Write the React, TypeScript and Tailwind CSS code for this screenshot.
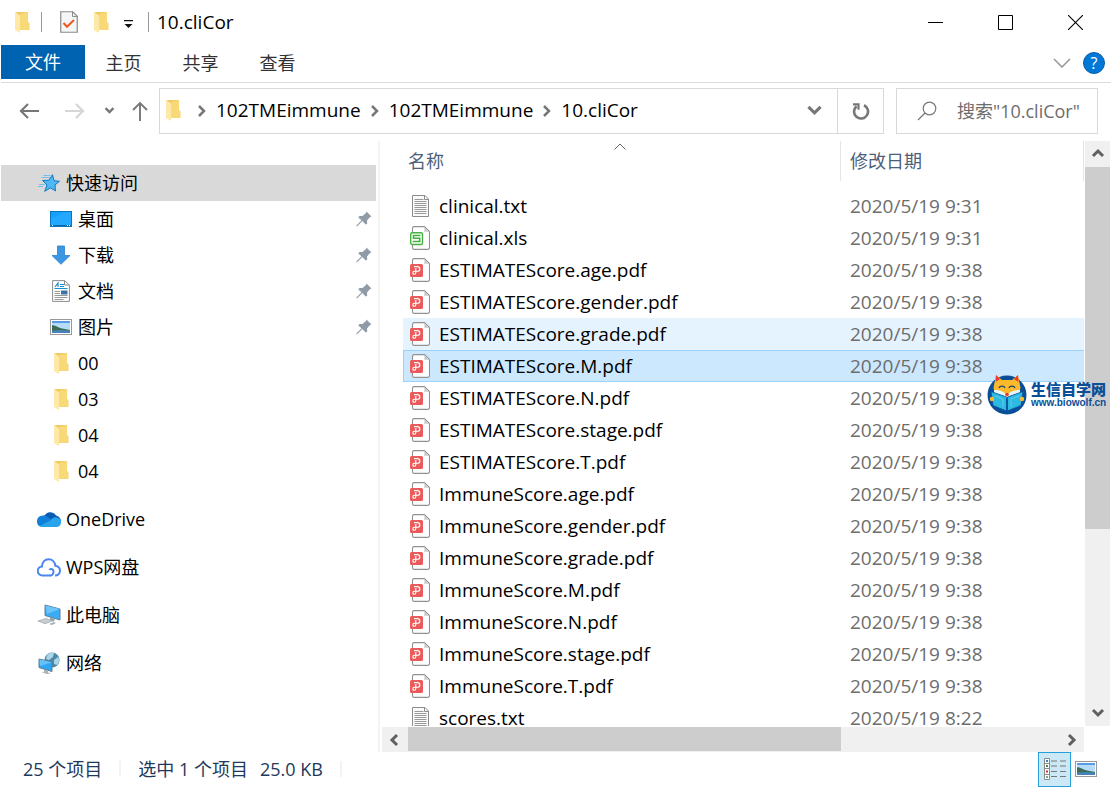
import type { ReactNode } from 'react'
import clsx from 'clsx'

type FileKind = 'txt' | 'xls' | 'pdf'

interface FileRow {
  name: string
  date: string
  state?: 'hover' | 'selected'
}

const files: FileRow[] = [
  { name: 'clinical.txt', date: '2020/5/19 9:31' },
  { name: 'clinical.xls', date: '2020/5/19 9:31' },
  { name: 'ESTIMATEScore.age.pdf', date: '2020/5/19 9:38' },
  { name: 'ESTIMATEScore.gender.pdf', date: '2020/5/19 9:38' },
  { name: 'ESTIMATEScore.grade.pdf', date: '2020/5/19 9:38', state: 'hover' },
  { name: 'ESTIMATEScore.M.pdf', date: '2020/5/19 9:38', state: 'selected' },
  { name: 'ESTIMATEScore.N.pdf', date: '2020/5/19 9:38' },
  { name: 'ESTIMATEScore.stage.pdf', date: '2020/5/19 9:38' },
  { name: 'ESTIMATEScore.T.pdf', date: '2020/5/19 9:38' },
  { name: 'ImmuneScore.age.pdf', date: '2020/5/19 9:38' },
  { name: 'ImmuneScore.gender.pdf', date: '2020/5/19 9:38' },
  { name: 'ImmuneScore.grade.pdf', date: '2020/5/19 9:38' },
  { name: 'ImmuneScore.M.pdf', date: '2020/5/19 9:38' },
  { name: 'ImmuneScore.N.pdf', date: '2020/5/19 9:38' },
  { name: 'ImmuneScore.stage.pdf', date: '2020/5/19 9:38' },
  { name: 'ImmuneScore.T.pdf', date: '2020/5/19 9:38' },
  { name: 'scores.txt', date: '2020/5/19 8:22' },
]

function FolderIcon() {
  return (
    <svg width="15" height="21" viewBox="0 0 15 21" className="shrink-0">
      <path d="M1 0h12v10l1.300 1.500V18H4z" fill="#f0ca64" />
      <path d="M5 2l8-2v10l1.300 1.500V18H5z" fill="#f8d978" />
      <path d="M0 0l5 3.500V21l-5-3z" fill="#ffe9a6" />
    </svg>
  )
}

function CheckDocIcon() {
  return (
    <svg width="18" height="22" viewBox="0 0 18 22" fill="none">
      <path d="M.75.75h12l4.500 4.500v16H.75z" fill="#f5f6f8" stroke="#8b8b8b" strokeWidth="1.200" />
      <path d="M12.500.75v4.800h4.700" stroke="#8b8b8b" />
      <path d="M3.500 12l3.500 3.800L14 9" stroke="#ee5a1c" strokeWidth="2" />
    </svg>
  )
}

function TextFileIcon() {
  return (
    <svg width="20" height="24" viewBox="0 0 20 24" fill="none">
      <path d="M2.500 1.500H15l3.500 3.500v17.500h-16z" fill="#fafafa" stroke="#8c8c8c" />
      <path d="M14.500 1.500v4h4" stroke="#8c8c8c" />
      <path
        d="M4.500 5.500h9M4.500 7.500h12M4.500 9.500h12M4.500 11.500h12M4.500 13.500h12M4.500 15.500h12M4.500 17.500h12M4.500 19.500h12"
        stroke="#999"
      />
    </svg>
  )
}

function PageOutline() {
  return (
    <>
      <path d="M4 .6h10.500l5 5v16a1.800 1.800 0 0 1-1.800 1.800H4A1.800 1.800 0 0 1 2.500 21.600V2.400A1.800 1.800 0 0 1 4 .6z" fill="#fff" stroke="#929292" strokeWidth="1.100" />
      <path d="M14.300 1v4.700h4.900z" fill="#c9c9c9" />
    </>
  )
}

function SheetFileIcon() {
  return (
    <svg width="20" height="24" viewBox="0 0 20 24" fill="none">
      <PageOutline />
      <rect x=".7" y="6.700" width="11.800" height="11.800" rx="1.500" fill="#fff" stroke="#45b23f" strokeWidth="1.400" />
      <path d="M10.500 9.500H3.500v2.800h6.200v3.200H2.700" stroke="#45b23f" strokeWidth="1.600" />
    </svg>
  )
}

function PdfFileIcon() {
  return (
    <svg width="20" height="24" viewBox="0 0 20 24" fill="none">
      <PageOutline />
      <rect y="6" width="13" height="13" rx="1.500" fill="#ec5b5b" />
      <path
        d="M4 8.600h3.500a2.300 2.300 0 0 1 0 4.700H4.200a1.500 1.500 0 1 0 1.600 1.500V10"
        stroke="#fff"
        strokeWidth="1.100"
      />
    </svg>
  )
}

function FileIcon({ kind }: { kind: FileKind }) {
  if (kind === 'txt') return <TextFileIcon />
  if (kind === 'xls') return <SheetFileIcon />
  return <PdfFileIcon />
}

function StarIcon() {
  return (
    <svg width="22" height="18" viewBox="0 0 22 18">
      <path d="M5.500 1.500h7M3.500 3.500h8M1 10.500h6M0 12.500h5" stroke="#5db8ee" strokeWidth=".8" />
      <path d="M14.500.7l1.500 6 5.500.6-4.500 3.600.5 6-5-3-5.800 3.400L9 11 4.500 6.500l6.300-.2z" fill="#4db8f5" stroke="#1478bb" strokeWidth="1" />
    </svg>
  )
}

function DesktopIcon() {
  return (
    <svg width="22" height="16" viewBox="0 0 22 16">
      <rect x=".5" y=".5" width="21" height="15" fill="#14a0ff" stroke="#0b76c0" />
      <path d="M1 14V8L14 1h7v13z" fill="#2eabff" opacity=".6" />
      <path d="M1 14.500h20" stroke="#0868ad" />
      <path d="M2 14.500h1M17 14.500h1M19 14.500h1" stroke="#fff" />
    </svg>
  )
}

function DownloadIcon() {
  return (
    <svg width="20" height="20" viewBox="0 0 20 20">
      <path d="M6.500 1h7v9.500h5.500l-9 8.800-9-8.800h5.500z" fill="#3b96e4" stroke="#2d7fca" strokeWidth=".8" />
    </svg>
  )
}

function DocumentIcon() {
  return (
    <svg width="18" height="22" viewBox="0 0 18 22" fill="none">
      <path d="M.6.6h12l4.800 4.500v16.300H.6z" fill="#fff" stroke="#8c8c8c" />
      <path d="M12.500.6V5h4.800" stroke="#8c8c8c" />
      <path d="M3 7l3-4v4M8 4.500h4M8 6.500h4M2.500 8.500h13" stroke="#1b8fd6" strokeWidth="1.200" />
      <path d="M2.500 11.500H8M2.500 13.500H8M2.500 15.500h13M2.500 17.500h13M2.500 19.500h9" stroke="#999" />
      <path d="M9 10.500h6.500v4H9z" fill="#3b73a8" />
    </svg>
  )
}

function PictureIcon() {
  return (
    <svg width="22" height="16" viewBox="0 0 22 16">
      <rect x=".5" y=".5" width="21" height="15" fill="#fff" stroke="#999" />
      <path d="M2 2h18v12H2z" fill="#b5dcf8" />
      <path d="M2 2h18v2H2z" fill="#5a9be6" />
      <path d="M2 6.500c3-1 6 2.500 10 3l8 1.500v1H2z" fill="#3e6b54" />
      <path d="M2 11.500c6-.8 12-.6 18 0V14H2z" fill="#4583b8" />
    </svg>
  )
}

function OneDriveIcon() {
  return (
    <svg width="24" height="16" viewBox="0 0 24 16">
      <path d="M7 5a7 7 0 0 1 12-.5 5.500 5.500 0 0 1 4.800 6.300L13 11z" fill="#0a5cb5" />
      <path d="M4.800 4.800c2-.5 4 0 5.500 1L18 11 3 15.500a5 5 0 0 1-3-5 5.600 5.600 0 0 1 4.800-5.700z" fill="#1180d8" />
      <path d="M2.500 15l11-5.500c1.500-2.500 4-3.800 6.500-3 3 .5 4.200 3 4 5.300-.2 2.500-2 4.200-4.500 4.200H5c-1 0-1.800-.4-2.500-1z" fill="#28a4ea" />
    </svg>
  )
}

function WpsCloudIcon() {
  return (
    <svg width="24" height="19" viewBox="0 0 24 19" fill="none" stroke="#4a86f0" strokeWidth="2">
      <path d="M13.500 17.500H5.500a4.500 4.500 0 0 1-.5-9C5 4 8 1.200 11.500 1.200c4 0 6.500 3 6.800 6.500 3 .5 4.700 2.500 4.700 5a4.800 4.800 0 0 1-5 4.800" />
      <path d="M12.500 12c.5-1.500 3.800-1.700 4 1.300.2 2.300-1.300 4.200-3.500 4.200" />
    </svg>
  )
}

function ComputerIcon() {
  return (
    <svg width="24" height="22" viewBox="0 0 24 22">
      <path d="M8 1l15 4v11L8 11.500z" fill="#39acf5" stroke="#5d7f95" />
      <path d="M8.500 1.500L23 5 10 10z" fill="#6cc4fb" />
      <path d="M13 13.500l5 1.500-1 2.500-4-1z" fill="#93a3ad" />
      <path d="M1 17l8-2.500 7 2.200-8 3z" fill="#c8ced3" stroke="#98a2a9" strokeWidth=".7" />
      <path d="M12 20l5-2 2 1-4 2z" fill="#a7b0b6" />
    </svg>
  )
}

function NetworkIcon() {
  return (
    <svg width="24" height="22" viewBox="0 0 24 22">
      <circle cx="15" cy="8" r="7.600" fill="#4b89a9" />
      <path d="M10 3c2-2 5-2.500 7-2l-1 4-4 3-3-1zM17 8l4-3c2 3 1 6-1 8l-3-1z" fill="#a9d5e6" />
      <path d="M2 7l13 3v9.500L2 15.500z" fill="#2fa6f2" stroke="#5b7c90" />
      <path d="M2.500 7.500L15 10.300 3 14z" fill="#67c2fb" />
      <path d="M7 17.500l4 1v2l3 1-4 .5-5-1.500 2-.5z" fill="#a8b3ba" />
    </svg>
  )
}

function PinIcon() {
  return (
    <svg width="16" height="16" viewBox="0 0 16 16">
      <path d="M10.500.5l5 5-1.500.5-3 3.500.2 3.200-1.500.8L6.300 10 1 15.500l-.8-.7L5.500 9.200 2.300 6.500 3.500 5h3L10 2z" fill="#8f9ba6" />
    </svg>
  )
}

type Direction = 'up' | 'down' | 'left' | 'right'

const chevrons: Record<Direction, string> = {
  up: 'M2 9l5-5 5 5',
  down: 'M2 4l5 5 5-5',
  left: 'M9 2L4 7l5 5',
  right: 'M5 2l5 5-5 5',
}

function Chevron({ dir, className, size = 14, weight = 2.5 }: { dir: Direction; className?: string; size?: number; weight?: number }) {
  return (
    <svg width={size} height={size} viewBox="0 0 14 14" fill="none" stroke="currentColor" strokeWidth={weight} className={className}>
      <path d={chevrons[dir]} />
    </svg>
  )
}

interface NavItem {
  label: string
  icon: ReactNode
  pinned?: boolean
}

const quickAccess: NavItem[] = [
  { label: '桌面', icon: <DesktopIcon />, pinned: true },
  { label: '下载', icon: <DownloadIcon />, pinned: true },
  { label: '文档', icon: <DocumentIcon />, pinned: true },
  { label: '图片', icon: <PictureIcon />, pinned: true },
  { label: '00', icon: <FolderIcon /> },
  { label: '03', icon: <FolderIcon /> },
  { label: '04', icon: <FolderIcon /> },
  { label: '04', icon: <FolderIcon /> },
]

const places: NavItem[] = [
  { label: 'OneDrive', icon: <OneDriveIcon /> },
  { label: 'WPS网盘', icon: <WpsCloudIcon /> },
  { label: '此电脑', icon: <ComputerIcon /> },
  { label: '网络', icon: <NetworkIcon /> },
]

function TitleBar() {
  return (
    <header className="flex h-[45px] shrink-0 items-center pr-px pb-px pl-3.5">
      <FolderIcon />
      <div className="ml-[11px] h-5 w-px bg-[#999]" />
      <button aria-label="属性" className="ml-[18px]">
        <CheckDocIcon />
      </button>
      <button aria-label="新建文件夹" className="ml-4">
        <FolderIcon />
      </button>
      <button aria-label="自定义快速访问工具栏" className="ml-3.5">
        <svg width="11" height="9" viewBox="0 0 11 9" className="mt-1">
          <path d="M1 0h9v1.200H1zM1.500 4h8l-4 4z" fill="#111" />
        </svg>
      </button>
      <div className="ml-3.5 h-5 w-px bg-[#999]" />
      <h1 className="ml-2 text-[19px] leading-6 text-black">10.cliCor</h1>
      <div className="ml-auto flex h-full">
        <button aria-label="最小化" className="flex w-[70px] items-center justify-center">
          <svg width="15" height="15" viewBox="0 0 15 15" stroke="#000">
            <path d="M0 7.500h15" />
          </svg>
        </button>
        <button aria-label="最大化" className="flex w-[70px] items-center justify-center">
          <svg width="15" height="15" viewBox="0 0 15 15" fill="none" stroke="#000">
            <path d="M.5.5h14v14H.5z" />
          </svg>
        </button>
        <button aria-label="关闭" className="flex w-[70px] items-center justify-center">
          <svg width="15" height="15" viewBox="0 0 15 15" stroke="#000" strokeWidth="1.100">
            <path d="M0 0l15 15M15 0L0 15" />
          </svg>
        </button>
      </div>
    </header>
  )
}

function RibbonTabs() {
  return (
    <div className="flex h-[38px] shrink-0 items-start border-b border-[#dadbdc] text-[18px] text-[#333]">
      <button className="h-[34px] w-[84px] bg-[#0063b1] text-white">文件</button>
      <button className="h-9 w-[77px]">主页</button>
      <button className="h-9 w-[77px]">共享</button>
      <button className="h-9 w-[77px]">查看</button>
      <div className="ml-auto flex h-9 items-center gap-3 pr-1.5">
        <button aria-label="展开功能区">
          <svg width="18" height="10" viewBox="0 0 18 10" fill="none" stroke="#9a9a9a" strokeWidth="1.600">
            <path d="M1 1l8 8 8-8" />
          </svg>
        </button>
        <button aria-label="帮助" className="size-[22px] rounded-full border border-[#0a5ea8] bg-[#0078d7] text-base leading-5 text-white">
          ?
        </button>
      </div>
    </div>
  )
}

function Crumb({ children }: { children: ReactNode }) {
  return (
    <>
      <Chevron dir="right" className="ml-1.5 shrink-0 text-[#777]" />
      <a href="#" className="ml-2">
        {children}
      </a>
    </>
  )
}

function AddressRow() {
  return (
    <div className="flex h-[58px] shrink-0 items-center pt-px pr-[13px] pb-1 text-[19px]">
      <button aria-label="后退" className="ml-[18px]">
        <svg width="20" height="16" viewBox="0 0 20 16" fill="none" stroke="#777" strokeWidth="2.200">
          <path d="M20 8H2M9 1L2 8l7 7" />
        </svg>
      </button>
      <button aria-label="前进" className="ml-[26px]">
        <svg width="20" height="16" viewBox="0 0 20 16" fill="none" stroke="#d6d6d6" strokeWidth="2.200">
          <path d="M0 8h18M11 1l7 7-7 7" />
        </svg>
      </button>
      <button aria-label="最近位置" className="ml-[19px]">
        <Chevron dir="down" size={11} weight={3} className="text-[#777]" />
      </button>
      <button aria-label="上移" className="ml-4">
        <svg width="18" height="20" viewBox="0 0 18 20" fill="none" stroke="#777" strokeWidth="1.900">
          <path d="M9 20V2M2 9l7-7 7 7" />
        </svg>
      </button>
      <div className="ml-2.5 flex h-[46px] min-w-0 flex-1 items-center border border-[#d9d9d9] pl-1.5 text-black">
        <span className="mr-[7px]">
          <FolderIcon />
        </span>
        <Crumb>102TMEimmune</Crumb>
        <Crumb>102TMEimmune</Crumb>
        <Crumb>10.cliCor</Crumb>
        <button aria-label="以前的位置" className="ml-auto flex h-full w-[45px] items-center justify-center text-[#777]">
          <Chevron dir="down" size={17} weight={2.500} />
        </button>
        <button aria-label="刷新" className="flex h-full w-[46px] items-center justify-center border-l border-[#d9d9d9]">
          <svg width="18" height="18" viewBox="0 0 18 18" fill="none" stroke="#777" strokeWidth="2.600">
            <path d="M12 3.200a7 7 0 1 1-7.500 1" />
            <path d="M1 2.300h5.500v5.500" strokeWidth="2.200" />
          </svg>
        </button>
      </div>
      <label className="ml-3 flex h-[46px] w-[202px] items-center border border-[#d9d9d9]">
        <svg width="20" height="20" viewBox="0 0 20 20" fill="none" stroke="#777" strokeWidth="1.200" className="ml-5 shrink-0">
          <circle cx="12.500" cy="7.500" r="6.300" />
          <path d="M8 12l-7 7" />
        </svg>
        <input
          type="text"
          aria-label="搜索"
          placeholder={'搜索"10.cliCor"'}
          className="ml-5 h-full min-w-0 flex-1 text-[18px] outline-none placeholder:text-[#6d6d6d]"
        />
      </label>
    </div>
  )
}

function Sidebar() {
  return (
    <nav className="w-[379px] shrink-0 border-r-2 border-[#f3f3f3] pt-6 text-[18px] text-black">
      <a href="#" className="mr-0.5 flex h-9 items-center gap-[5px] bg-[#d9d9d9] pl-9">
        <span className="flex w-6 justify-center">
          <StarIcon />
        </span>
        快速访问
      </a>
      {quickAccess.map((item, i) => (
        <a key={i} href="#" className="flex h-9 items-center gap-[5px] pr-1.5 pl-12">
          <span className="flex w-6 justify-center">{item.icon}</span>
          {item.label}
          {item.pinned && (
            <span className="ml-auto">
              <PinIcon />
            </span>
          )}
        </a>
      ))}
      {places.map((item) => (
        <a key={item.label} href="#" className="mt-3 flex h-9 items-center gap-[5px] pl-9">
          <span className="flex w-6 justify-center">{item.icon}</span>
          {item.label}
        </a>
      ))}
    </nav>
  )
}

function FileTable() {
  return (
    <div className="min-w-0 flex-1 overflow-hidden pl-[21px]">
      <table className="w-full table-fixed border-collapse text-left text-[19px]">
        <thead className="text-[18px] text-[#4c607a]">
          <tr>
            <th className="h-[49px] w-[438px] p-0 align-top font-normal">
              <div className="relative flex h-10 items-center border-r border-[#e5e5e5] pl-[5px]">
                名称
                <svg width="12" height="7" viewBox="0 0 12 7" fill="none" stroke="#666" className="absolute top-0.5 left-1/2 -translate-x-2">
                  <path d="M.5 6.500L6 1l5.500 5.500" />
                </svg>
              </div>
            </th>
            <th className="h-[49px] p-0 align-top font-normal">
              <div className="flex h-10 items-center border-r border-[#e5e5e5] pl-[9px]">修改日期</div>
            </th>
          </tr>
        </thead>
        <tbody>
          {files.map((file) => (
            <tr
              key={file.name}
              className={clsx(
                'h-8',
                file.state === 'hover' && 'bg-[#e5f3ff]',
                file.state === 'selected' && 'bg-[#cce8ff] shadow-[inset_1px_1px_0_#99d1ff,inset_0_-1px_0_#99d1ff]',
              )}
            >
              <td className="p-0">
                <div className="flex h-8 items-center gap-[9px] pl-[7px] text-black">
                  <FileIcon kind={file.name.split('.').pop() as FileKind} />
                  {file.name}
                </div>
              </td>
              <td className="p-0 pl-[9px] text-[#6d6d6d]">{file.date}</td>
            </tr>
          ))}
        </tbody>
      </table>
    </div>
  )
}

function WolfLogo() {
  return (
    <svg width="40" height="41" viewBox="0 0 40 41">
      <circle cx="20" cy="21" r="19.500" fill="#0a4e98" />
      <path d="M9 1l6 5h10l6-5 2.500 13-2.500 8H9l-2.500-8z" fill="#fdb92c" />
      <path d="M9 1l4 4-4.500 3zM31 1l-4 4 4.500 3z" fill="#e83a2d" />
      <path d="M12 14c1-2.500 5-2.500 6 0M22 14c1-2.500 5-2.500 6 0" fill="none" stroke="#123f70" strokeWidth="1.300" />
      <path d="M7 16c5-.5 10 1.500 13 5 3-3.500 8-5.500 13-5v4l-13 5-13-5z" fill="#e6f7fc" />
      <path d="M4 17.500L19.500 23v14L6 31.500zM36 17.500L20.500 23v14L34 31.500z" fill="#2db9e2" stroke="#0a4e98" strokeWidth=".8" />
      <path d="M8 22l8 3v8M32 22l-8 3v8" fill="none" stroke="#65d4ef" strokeWidth=".8" />
      <circle cx="5" cy="25" r="2.200" fill="#fdb92c" />
      <circle cx="35" cy="25" r="2.200" fill="#fdb92c" />
      <circle cx="20" cy="20.500" r="1.800" fill="#e83a2d" />
    </svg>
  )
}

// site mark that floats above the list
function Watermark() {
  return (
    <div className="pointer-events-none absolute top-[233px] right-[5px] flex items-center gap-1 text-[#0a4e98]">
      <WolfLogo />
      <div className="w-[75px] whitespace-nowrap">
        <p className="text-[15px] leading-4 font-black">生信自学网</p>
        <p className="font-['Liberation_Sans'] text-[10px] leading-3 font-bold">www.biowolf.cn</p>
      </div>
    </div>
  )
}

function FilePane() {
  return (
    <main className="relative flex min-w-0 flex-1 flex-col pl-0.5">
      <div className="flex min-h-0 flex-1">
        <FileTable />
        <div className="mr-px ml-px flex w-[25px] shrink-0 flex-col bg-[#f0f0f0] text-[#606060]">
          <button aria-label="向上滚动" className="flex h-[26px] shrink-0 items-center justify-center">
            <Chevron dir="up" weight={3} />
          </button>
          <div className="min-h-0 flex-1">
            <div className="h-[68%] bg-[#cdcdcd]" />
          </div>
          <button aria-label="向下滚动" className="flex h-[26px] shrink-0 items-center justify-center">
            <Chevron dir="down" weight={3} />
          </button>
        </div>
      </div>
      <div className="mt-px mr-[27px] flex h-[25px] shrink-0 bg-[#f0f0f0] text-[#606060]">
        <button aria-label="向左滚动" className="flex w-[26px] shrink-0 items-center justify-center">
          <Chevron dir="left" weight={3} />
        </button>
        <div className="flex-1">
          <div className="h-6 w-2/3 bg-[#cdcdcd]" />
        </div>
        <button aria-label="向右滚动" className="flex w-[26px] shrink-0 items-center justify-center">
          <Chevron dir="right" weight={3} />
        </button>
      </div>
      <Watermark />
    </main>
  )
}

function StatusBar() {
  return (
    <footer className="flex h-9 shrink-0 items-center pr-3.5 pb-0.5 pl-[22px] text-[18px] text-[#1e395b]">
      <span>25 个项目</span>
      <div className="mx-[17px] h-4 w-0.5 bg-[#f3f3f3]" />
      <span>选中 1 个项目</span>
      <span className="ml-3">25.0 KB</span>
      <div className="ml-[17px] h-4 w-0.5 bg-[#f3f3f3]" />
      <button aria-label="详细信息" className="ml-auto flex h-[35px] w-[33px] items-center justify-center border border-[#26a0da] bg-[#cbe8f6]">
        <svg width="22" height="22" viewBox="0 0 22 22" fill="none">
          <path d="M.5.5h5v21h-5zM.5 5.500h5M.5 10.500h5M.5 16.500h5" fill="#fff" stroke="#8a8a8a" />
          <path d="M7 3h6M16 3h6M7 8h6M16 8h6M7 13.500h6M16 13.500h6M7 18.500h6M16 18.500h6" stroke="#777" />
          <path d="M2 2h2v2H2z" fill="#3a7fc0" />
          <path d="M2 7h2v2H2z" fill="#4f8a4a" />
          <path d="M2 12.500h2v2H2z" fill="#c0392b" />
          <path d="M2 18h2v2H2z" fill="#7fa98a" />
        </svg>
      </button>
      <button aria-label="大缩略图" className="ml-1">
        <PictureIcon />
      </button>
    </footer>
  )
}

export default function App() {
  return (
    <div className="flex h-screen flex-col overflow-hidden bg-white pl-px font-['Open_Sans','Noto_Sans_CJK_SC',sans-serif]">
      <TitleBar />
      <RibbonTabs />
      <AddressRow />
      <div className="flex min-h-0 flex-1">
        <Sidebar />
        <FilePane />
      </div>
      <StatusBar />
    </div>
  )
}
